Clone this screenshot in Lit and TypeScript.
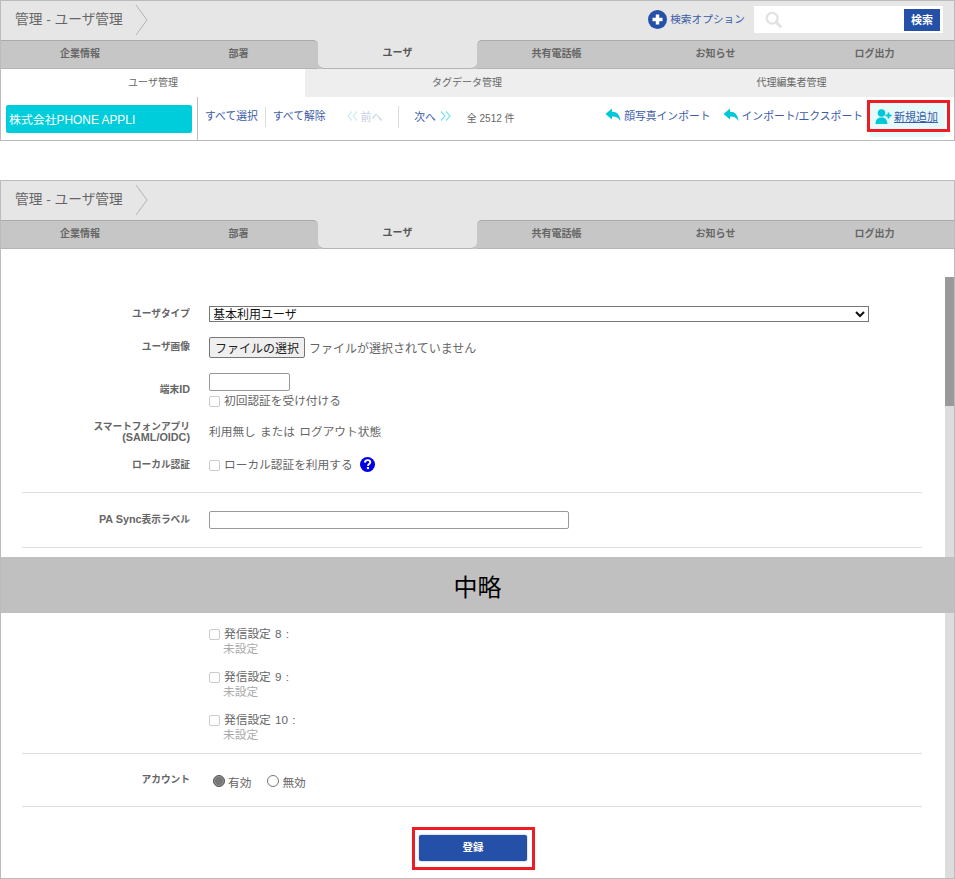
import { LitElement, html, css, svg } from "lit";
import { customElement } from "lit/decorators.js";

const tabs = ["企業情報", "部署", "ユーザ", "共有電話帳", "お知らせ", "ログ出力"];

const headerBar = () => html`
  <div class="crumb">
    <span class="crumb-text">管理 - ユーザ管理</span>
    <svg class="crumb-arrow" width="14" height="32" viewBox="0 0 14 32"><path d="M1 1 L12 16 L1 31" fill="none" stroke="#b4b4b4" stroke-width="1"/></svg>
  </div>`;

const tabBar = () => html`
  <div class="tabs">
    ${tabs.map((t, i) => html`<div class="tab ${i === 2 ? "active" : ""} ${i === 1 ? "before" : ""} ${i === 3 ? "after" : ""}">${t}</div>`)}
  </div>`;

const replyIcon = svg`<svg class="ico" width="16" height="14" viewBox="0 0 16 14"><path d="M0.5 6 L7 0.5 V3.8 C12 3.8 15 7 15.5 13 C13.5 9.5 11 8.4 7 8.4 V11.6 Z" fill="#00c8d8"/></svg>`;

@customElement("app-root")
export class AppRoot extends LitElement {
  static styles = css`
    :host {
      display: block;
      width: 955px;
      height: 879px;
      overflow: hidden;
      background: #fff;
      font-family: "Liberation Sans", "Noto Sans CJK JP", sans-serif;
      color: #666;
    }
    .panel { border: 1px solid #bbb; box-sizing: border-box; width: 955px; }
    .panel.top { height: 141px; margin-bottom: 39px; }
    .panel.bottom { height: 699px; position: relative; overflow: hidden; }

    .head { height: 39px; background: #e6e6e6; display: flex; align-items: center; justify-content: space-between; }
    .crumb { display: flex; align-items: center; padding-left: 14px; }
    .crumb-text { font-size: 13.7px; color: #666; margin: -6px 12px 0 0; }
    .crumb-arrow { display: block; margin-top: -1px; }
    .head-right { display: flex; align-items: center; margin: -2px 11px 0 0; }
    .opt { display: flex; align-items: center; gap: 3px; font-size: 10.7px; color: #3d5ca8; margin-right: 9px; }
    .opt span { margin-top: -2px; }
    .search { width: 189px; height: 27px; background: #fff; display: flex; align-items: center; justify-content: space-between; box-sizing: border-box; padding: 0 3px 0 11px; }
    .search-btn { width: 36px; height: 22px; background: #2550a8; color: #fff; font-size: 11px; font-weight: 700; display: flex; align-items: center; justify-content: center; padding-bottom: 2px; box-sizing: border-box; }

    .tabs { display: grid; grid-template-columns: 158px repeat(5, 159px); height: 29px; box-sizing: border-box; background: linear-gradient(#e6e6e6 50%, #c6c6c6 50%); }
    .tab { font-size: 10px; font-weight: 700; color: #666; display: flex; align-items: center; justify-content: center; box-sizing: border-box; background: #c6c6c6; border-top: 1px solid #aaa; border-bottom: 1px solid #b4b4b4; padding-bottom: 5px; }
    .tab.before { border-top-right-radius: 5px; }
    .tab.after { border-top-left-radius: 5px; }
    .tab.active { background: #e6e6e6; color: #555; border-top: 0; border-radius: 0 0 6px 6px; }

    .sub { display: grid; grid-template-columns: 304px 324px 325px; height: 28px; background: #eee; }
    .sub div { font-size: 10px; color: #666; display: flex; align-items: center; justify-content: center; padding-bottom: 3px; box-sizing: border-box; }
    .sub div:first-child { background: #fff; }

    .bar { height: 43px; display: flex; align-items: stretch; position: relative; }
    .chip-wrap { width: 197px; box-sizing: border-box; border-right: 1px solid #bbb; padding: 8px 5px 0 5px; flex: none; }
    .chip { height: 28px; background: #00cddb; border-radius: 2px; color: #fff; font-size: 11.9px; display: flex; align-items: center; padding: 0 0 2px 3px; box-sizing: border-box; white-space: nowrap; }
    .links { display: flex; align-items: center; font-size: 10.8px; color: #3d5ca8; height: 30px; margin-top: 4px; }
    .links > span { white-space: nowrap; }
    .sel { padding: 0 7px 2px 7px; margin-top: 2px; border-right: 1px solid #ddd; line-height: 18px; }
    .sel.second { padding-left: 7px; border-right: 0; }
    .pager { display: flex; align-items: center; gap: 3px; }
    .prev { color: #c4cfe4; padding: 0 16px 2px 14px; margin-top: 2px; border-right: 1px solid #ddd; height: 20px; box-sizing: content-box; }
    .next { padding-left: 15px; gap: 4px; }
    .count { font-size: 10px; color: #666; margin-left: 16px; margin-top: 3px; }
    .actions { margin-left: auto; display: flex; align-items: flex-start; font-size: 10.8px; color: #3d5ca8; }
    .act { display: flex; align-items: center; gap: 3px; height: 26px; margin-top: 5px; margin-right: 12px; white-space: nowrap; }
    .act.last { margin-right: 7px; }
    .ico { display: block; flex: none; }
    .add { position: relative; width: 75px; height: 34px; margin: 6px 9px 0 0; box-sizing: border-box; background: #e6f9fb; padding-left: 5px; }
    .add-inner { display: flex; align-items: center; gap: 2px; height: 26px; font-size: 11px; color: #3d5ca8; white-space: nowrap; }
    .add-inner span { text-decoration: underline; }
    .add::after { content: ""; position: absolute; left: -3px; right: -5px; top: -3px; bottom: 5px; border: 3px solid #ee1c25; }

    .row { display: grid; grid-template-columns: 189px 1fr; column-gap: 19px; align-items: start; }
    .lab { font-size: 9.7px; font-weight: 700; color: #666; text-align: right; line-height: 11px; }
    .lat { font-size: 10.8px; }
    .val { font-size: 11.7px; color: #666; line-height: 16px; word-spacing: 1px; }
    .sp-type { margin-top: 57px; height: 31px; }
    .sp-type .lab { margin-top: 2px; }
    select { display: block; width: 660px; height: 16px; box-sizing: border-box; font: 12px "Liberation Sans", "Noto Sans CJK JP", sans-serif; color: #111; background: #fff; border: 1px solid #777; border-radius: 0; padding: 0; text-indent: -1px; }
    .sp-img { height: 36px; }
    .sp-img .lab { margin-top: 4px; }
    .file { display: flex; align-items: center; gap: 4px; height: 21px; font-size: 12px; }
    .file span { margin-top: 2px; }
    .file button { width: 96px; height: 21px; box-sizing: border-box; font: 12px "Liberation Sans", "Noto Sans CJK JP", sans-serif; color: #222; background: #efefef; border: 1px solid #767676; border-radius: 2px; padding: 0; }
    .sp-id { height: 50px; }
    .sp-id .lab { margin-top: 11px; }
    .txt { display: block; height: 18px; box-sizing: border-box; border: 1px solid #999; border-radius: 2px; background: #fff; padding: 0; margin: 0; }
    .txt.short { width: 81px; }
    .txt.long { width: 360px; }
    .chk { display: flex; align-items: center; gap: 4px; }
    .chk input, .radio input { appearance: none; margin: 0; background: #fff; flex: none; }
    .chk input { width: 11px; height: 11px; border: 1px solid #ccc; border-radius: 2px; box-sizing: border-box; }
    .sp-id .chk { margin-top: 2px; }
    .sp-app { height: 33px; }
    .sp-app .lab { margin-top: -2px; }
    .sp-app .val { margin-top: 1px; }
    .sp-local { height: 36px; }
    .sp-local .lab { margin-top: 3px; }
    .sp-local .val { margin-top: 1px; }
    .help { margin: -2px 0 0 3px; display: block; }
    hr { border: 0; border-top: 1px solid #ddd; margin: 0 32px 0 21px; }
    .sp-sync { height: 36px; margin-top: 18px; }
    .sp-sync .lab { margin-top: 3px; }
    .omit { height: 56px; margin-top: 9px; background: #c0c0c0; color: #000; font-size: 24px; display: flex; align-items: center; justify-content: center; position: relative; z-index: 1; }
    .calls { margin: 13px 0 0 208px; height: 127px; }
    .call { height: 43px; }
    .call .none { color: #aaa; padding-left: 14px; display: block; line-height: 14px; margin-top: 0; }
    .sp-acc { height: 52px; }
    .sp-acc .lab { margin-top: 20px; }
    .radios { display: flex; align-items: center; gap: 16px; margin: 18px 0 0 4px; }
    .radio { display: flex; align-items: center; gap: 3px; }
    .radio span { margin-top: 3px; }
    .radio input { width: 12px; height: 12px; border: 1px solid #777; border-radius: 50%; box-sizing: border-box; margin-top: -2px; }
    .radio input:checked { background: #777; box-shadow: inset 0 0 0 1px #999; border-color: #555; }
    .submit-row { display: flex; justify-content: center; margin: 28px 32px 0 0; padding-left: 23px; }
    .submit-box { position: relative; display: block; }
    .submit-box::after { content: ""; position: absolute; left: -7px; right: -8px; top: -8px; bottom: -9px; border: 3px solid #ee1c25; pointer-events: none; }
    .submit { display: block; width: 108px; height: 26px; margin: 0; border: 0; background: #2550a8; color: #fff; font: 700 10.5px "Liberation Sans", "Noto Sans CJK JP", sans-serif; border-radius: 2px; box-shadow: 0 0 2px #8b9cc8; padding: 0 0 3px 0; }

    .scroll { position: absolute; right: 0; top: 96px; width: 9px; bottom: 0; background: #ddd; }
    .thumb { height: 129px; background: #999; }
  `;

  render() {
    return html`
      <div class="panel top">
        <div class="head">
          ${headerBar()}
          <div class="head-right">
            <div class="opt">
              <svg width="19" height="19" viewBox="0 0 19 19"><circle cx="9.5" cy="9.5" r="9.5" fill="#2550a8"/><path d="M9.5 4.5 V14.5 M4.5 9.5 H14.5" stroke="#fff" stroke-width="3.4"/></svg>
              <span>検索オプション</span>
            </div>
            <div class="search">
              <svg width="18" height="18" viewBox="0 0 20 20"><circle cx="8" cy="8" r="6" fill="none" stroke="#e2e2e2" stroke-width="2.6"/><path d="M12.5 12.5 L18 18" stroke="#e2e2e2" stroke-width="3.2"/></svg>
              <div class="search-btn">検索</div>
            </div>
          </div>
        </div>
        ${tabBar()}
        <div class="sub"><div>ユーザ管理</div><div>タグデータ管理</div><div>代理編集者管理</div></div>
        <div class="bar">
          <div class="chip-wrap"><div class="chip">株式会社PHONE APPLI</div></div>
          <div class="links">
            <span class="sel">すべて選択</span>
            <span class="sel second">すべて解除</span>
            <span class="pager prev">
              <svg width="11" height="10" viewBox="0 0 11 10"><path d="M5 0.5 L1 5 L5 9.5 M10 0.5 L6 5 L10 9.5" fill="none" stroke="#cfeef4" stroke-width="1.2"/></svg>前へ
            </span>
            <span class="pager next">次へ
              <svg width="11" height="10" viewBox="0 0 11 10"><path d="M1 0.5 L5 5 L1 9.5 M6 0.5 L10 5 L6 9.5" fill="none" stroke="#7fe3ec" stroke-width="1.2"/></svg>
            </span>
            <span class="count">全 2512 件</span>
          </div>
          <div class="actions">
            <span class="act">${replyIcon}顔写真インポート</span>
            <span class="act last">${replyIcon}インポート/エクスポート</span>
            <div class="add">
              <div class="add-inner">
                <svg width="17" height="15" viewBox="0 0 17 15"><circle cx="6.5" cy="4" r="3.8" fill="#00c8d8"/><path d="M0.5 15 C0.5 10 3 8.5 6.5 8.5 C10 8.5 12 10 12.5 15 Z" fill="#00c8d8"/><path d="M13.5 3.5 V9.5 M10.5 6.5 H16.5" stroke="#00c8d8" stroke-width="1.8"/></svg>
                <span>新規追加</span>
              </div>
            </div>
          </div>
        </div>
      </div>

      <div class="panel bottom">
        <div class="head">${headerBar()}</div>
        ${tabBar()}
        <div class="scroll"><div class="thumb"></div></div>
        <div class="form">
          <div class="row sp-type">
            <div class="lab">ユーザタイプ</div>
            <div class="val"><select><option>基本利用ユーザ</option></select></div>
          </div>
          <div class="row sp-img">
            <div class="lab">ユーザ画像</div>
            <div class="val file"><button>ファイルの選択</button><span>ファイルが選択されていません</span></div>
          </div>
          <div class="row sp-id">
            <div class="lab">端末<span class="lat">ID</span></div>
            <div class="val">
              <input class="txt short" />
              <label class="chk"><input type="checkbox" /><span>初回認証を受け付ける</span></label>
            </div>
          </div>
          <div class="row sp-app">
            <div class="lab">スマートフォンアプリ<br /><span class="lat">(SAML/OIDC)</span></div>
            <div class="val">利用無し または ログアウト状態</div>
          </div>
          <div class="row sp-local">
            <div class="lab">ローカル認証</div>
            <div class="val chk">
              <input type="checkbox" /><span>ローカル認証を利用する</span>
              <svg class="help" width="15" height="15" viewBox="0 0 15 15"><circle cx="7.5" cy="7.5" r="7.5" fill="#0000e6"/><path d="M4.9 5.6 C5 3.9 6.2 3.1 7.6 3.1 C9.2 3.1 10.3 4 10.3 5.3 C10.3 7 8 7.2 8 8.9" fill="none" stroke="#fff" stroke-width="1.9"/><rect x="6.9" y="10" width="2.1" height="2.1" fill="#fff"/></svg>
            </div>
          </div>
          <hr />
          <div class="row sp-sync">
            <div class="lab"><span class="lat">PA Sync</span>表示ラベル</div>
            <div class="val"><input class="txt long" /></div>
          </div>
          <hr />
          <div class="omit">中略</div>
          <div class="calls">
            <div class="call val">
              <label class="chk"><input type="checkbox" /><span>発信設定 8 :</span></label>
              <span class="none">未設定</span>
            </div>
            <div class="call val">
              <label class="chk"><input type="checkbox" /><span>発信設定 9 :</span></label>
              <span class="none">未設定</span>
            </div>
            <div class="call val">
              <label class="chk"><input type="checkbox" /><span>発信設定 10 :</span></label>
              <span class="none">未設定</span>
            </div>
          </div>
          <hr />
          <div class="row sp-acc">
            <div class="lab">アカウント</div>
            <div class="val radios">
              <label class="radio"><input type="radio" name="acc" checked /><span>有効</span></label>
              <label class="radio"><input type="radio" name="acc" /><span>無効</span></label>
            </div>
          </div>
          <hr />
          <div class="submit-row"><span class="submit-box"><button class="submit">登録</button></span></div>
        </div>
      </div>
    `;
  }
}
